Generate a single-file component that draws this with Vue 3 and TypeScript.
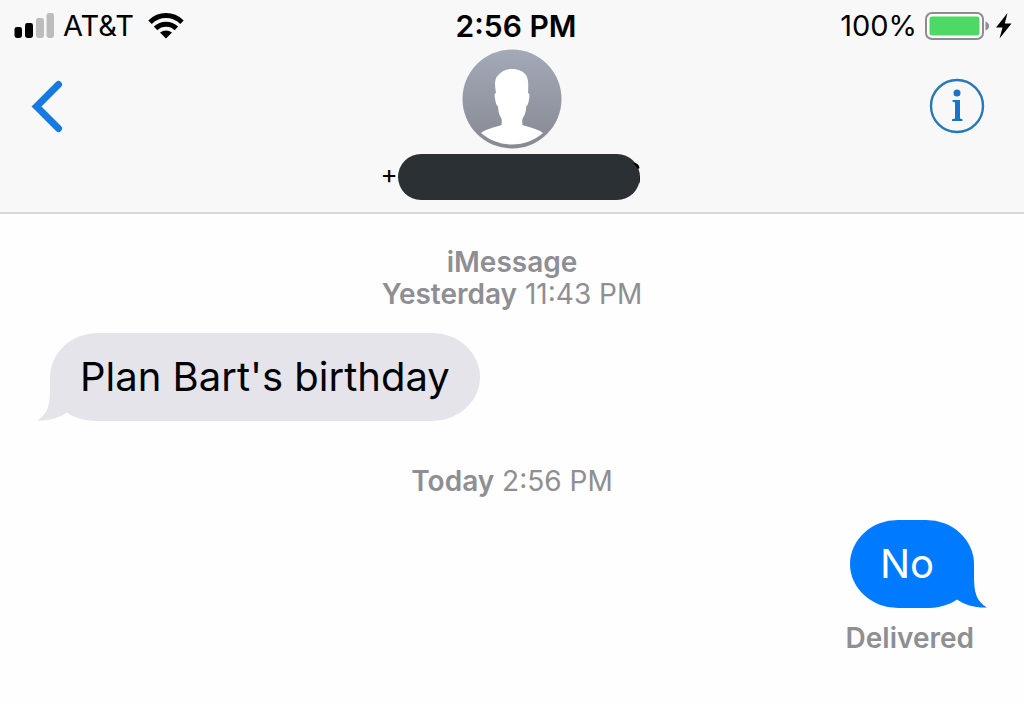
<script setup lang="ts">
interface Message {
  id: number
  service?: string
  day: string
  time: string
  text: string
  outgoing: boolean
  receipt?: string
}

const carrier = 'AT&T'
const clock = '2:56 PM'
const battery = 100

const messages: Message[] = [
  { id: 1, service: 'iMessage', day: 'Yesterday', time: '11:43 PM', text: "Plan Bart's birthday", outgoing: false },
  { id: 2, day: 'Today', time: '2:56 PM', text: 'No', outgoing: true, receipt: 'Delivered' },
]
</script>

<template>
  <div class="screen">
    <header class="top">
      <div class="status">
        <div class="side">
          <svg class="signal" width="40" height="26" viewBox="0 0 40 26" aria-hidden="true">
            <rect x="0.5" y="14" width="7.5" height="11" rx="2.4" fill="#000" />
            <rect x="11" y="10" width="8" height="15" rx="2.4" fill="#000" />
            <rect x="22" y="5" width="8" height="20" rx="2.4" fill="#bdbdbd" />
            <rect x="32.5" y="0" width="7.5" height="25" rx="2.4" fill="#bdbdbd" />
          </svg>
          <span class="carrier">{{ carrier }}</span>
          <svg class="wifi" width="36" height="26" viewBox="0 0 36 26" aria-hidden="true">
            <g fill="none" stroke="#000" stroke-width="5">
              <path d="M2 9.2 Q9 2.6 18 2.6 T34 9.2" />
              <path d="M7.6 15.3 Q12 11.2 18 11.2 T28.4 15.3" />
            </g>
            <path d="M12 19.5 Q18 15.4 24 19.5 L18 25.5Z" fill="#000" />
          </svg>
        </div>
        <span class="clock">{{ clock }}</span>
        <div class="side end">
          <span>{{ battery }}%</span>
          <svg class="battery" width="64" height="28" viewBox="0 0 64 28" aria-hidden="true">
            <rect x="1" y="1" width="57" height="26" rx="6" fill="#fff" stroke="#8f8c90" stroke-width="2" />
            <rect x="4.5" y="4.5" width="50" height="19" rx="2.5" fill="#4cd964" />
            <path d="M60.5 9.5 Q64 11 64 14 T60.5 18.5Z" fill="#8f8c90" />
          </svg>
          <svg class="bolt" width="16" height="26" viewBox="0 0 16 26" aria-hidden="true">
            <path d="M11.500 0 L0 14.5 H6.5 L3.5 25.5 L15.5 10.5 H8.8Z" fill="#000" />
          </svg>
        </div>
      </div>

      <div class="nav">
        <button class="icon back" type="button" aria-label="Back">
          <svg width="32" height="54" viewBox="0 0 32 54">
            <path d="M27.500 4.5 L5.5 26.5 L27.5 48.5" fill="none" stroke="#157be0" stroke-width="7" stroke-linecap="round" stroke-linejoin="miter" />
          </svg>
        </button>
        <div class="contact">
          <svg class="avatar" width="100" height="100" viewBox="0 0 100 100" role="img" aria-label="Contact photo">
            <defs>
              <linearGradient id="avatar-fill" x1="0" y1="0" x2="0" y2="1">
                <stop offset="0" stop-color="#a4a9b8" />
                <stop offset="1" stop-color="#868992" />
              </linearGradient>
            </defs>
            <circle cx="50" cy="50" r="49.5" fill="url(#avatar-fill)" />
            <path d="M50 20 C57 20 61 22.500 64 26 C67 31 66.300 38 66 44 C68 44 67.500 48 66.800 51.500 C66.300 55 65.500 57 64.300 57 C64 61 63.500 65 61.500 68 C60 70 60 72 60.500 76 C66 78 76 80 81 84 C73 91 62 95.500 50 95.500 C38 95.500 27 91 19 84 C24 80 34 78 39.500 76 C40 72 40 70 38.500 68 C36.800 65 36.300 61 36 57 C34.800 57 34 55 33.300 51.500 C32.500 48 32 44 34 44 C33 38 32 32 35 27.500 C39 22.500 44 20 50 20Z" fill="#fff" />
          </svg>
          <div class="number">
            <span class="plus">+</span>
            <span class="redacted">
              <svg class="digit-edge" width="8" height="28" viewBox="0 0 8 28" aria-hidden="true">
                <path d="M1 0.5 Q7 1 7.5 6 L6 7Z M7 14 Q8 16 8 20 L7.500 22Z" fill="#000" />
              </svg>
            </span>
          </div>
        </div>
        <button class="icon info" type="button" aria-label="Details">
          <svg width="56" height="56" viewBox="0 0 56 56">
            <circle cx="28" cy="28" r="26" fill="none" stroke="#2878b8" stroke-width="2.4" />
            <circle cx="28" cy="15" r="3.5" fill="#1b74c8" />
            <path d="M23.5 22 H31 V40.500 L33.500 41.300 V43 H23 V41.300 L26 40.500 V24.500 L23.500 23.500Z" fill="#1b74c8" />
          </svg>
        </button>
      </div>
    </header>

    <main class="thread">
      <section v-for="m in messages" :key="m.id" class="entry" :class="{ outgoing: m.outgoing }">
        <div class="stamp">
          <div v-if="m.service"><b>{{ m.service }}</b></div>
          <div><b>{{ m.day }}</b> {{ m.time }}</div>
        </div>
        <div class="bubble">
          <svg class="tail" width="60" height="44" viewBox="0 0 60 44" aria-hidden="true">
            <path d="M13 0 V12 C13 28 11 37 0 43.5 C12 44 22 41 30 35.5 C38 41 48 44 60 44 V0Z" fill="currentColor" />
          </svg>
          <span class="words">{{ m.text }}</span>
        </div>
        <div v-if="m.receipt" class="receipt">{{ m.receipt }}</div>
      </section>
    </main>
  </div>
</template>

<style>
body {
  margin: 0;
  background: #fff;
}
</style>

<style scoped>
.screen {
  min-height: 100vh;
  background: #fefefe;
  color: #000;
  font-family: Inter, "Liberation Sans", sans-serif;
}

.top {
  background: #f8f8f8;
  border-bottom: 2px solid #d9d9da;
}

.status {
  display: grid;
  grid-template-columns: 1fr auto 1fr;
  align-items: center;
  height: 49px;
  padding: 1px 12px 0 14px;
  box-sizing: border-box;
  font-size: 29px;
  line-height: 50px;
}

.side {
  display: flex;
  align-items: center;
}

.end {
  justify-content: flex-end;
}

.carrier {
  margin-left: 9px;
}

.wifi {
  margin-left: 14px;
}

.clock {
  padding-left: 6px;
  font-size: 30px;
  font-weight: 600;
}

.battery {
  margin-left: 8px;
}

.bolt {
  margin-left: 7px;
}

.nav {
  display: grid;
  grid-template-columns: 1fr auto 1fr;
  align-items: start;
  padding: 0 31px 12px;
}

.icon {
  display: flex;
  padding: 0;
  border: 0;
  background: none;
  cursor: pointer;
}

.back {
  margin-top: 31px;
}

.info {
  justify-self: end;
  margin: 29px 8px 0 0;
}

.contact {
  display: flex;
  flex-direction: column;
  align-items: center;
  gap: 5px;
}

.number {
  display: flex;
  align-items: center;
  padding-right: 4px;
  font-size: 26px;
  line-height: 40px;
}

.contact {
  min-width: 264px;
}

.plus {
  align-self: flex-start;
}

.redacted {
  position: relative;
  width: 242px;
  height: 46px;
  border-radius: 23px;
  background: #2a3034;
}

.digit-edge {
  position: absolute;
  top: 8px;
  right: 0;
}

.thread {
  padding: 32px 50px;
}

.entry {
  display: flex;
  flex-direction: column;
  align-items: flex-start;
}

.entry + .entry {
  margin-top: 44px;
}

.outgoing {
  align-items: flex-end;
}

.stamp {
  align-self: center;
  margin-bottom: 23px;
  color: #8e8e93;
  font-size: 28px;
  line-height: 32px;
  text-align: center;
}

.stamp b,
.receipt {
  font-weight: 600;
}

.bubble {
  position: relative;
  padding: 0 30px;
  border-radius: 48px / 44px;
  background: #e5e4ea;
  font-size: 40px;
  line-height: 88px;
}

.tail {
  position: absolute;
  bottom: 0;
  left: -13px;
  color: #e5e4ea;
}

.outgoing .bubble {
  padding-right: 40px;
  background: #007aff;
  color: #fff;
}

.outgoing .tail {
  right: -13px;
  left: auto;
  color: #007aff;
  transform: scaleX(-1);
}

.words {
  position: relative;
}

.receipt {
  margin-top: 14px;
  color: #8e8e93;
  font-size: 28px;
  line-height: 32px;
}
</style>
